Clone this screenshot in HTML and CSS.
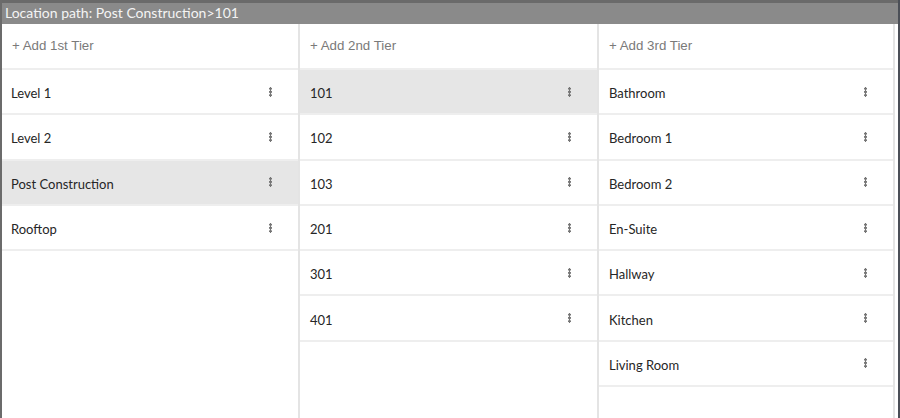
FILE: index.html
```html
<!DOCTYPE html>
<html lang="en">
<head>
    <meta charset="UTF-8">
    <title>Locations</title>
    <link rel="stylesheet" href="styles.css">
</head>
<body>
    <div class="locations">
        <div class="path-bar">Location path: Post Construction&gt;101</div>
        <div class="tiers">
            <div class="tier">
                <div class="add-row">+ Add 1st Tier</div>
                <div class="item"><span>Level 1</span><i class="kebab"></i></div>
                <div class="item"><span>Level 2</span><i class="kebab"></i></div>
                <div class="item selected"><span>Post Construction</span><i class="kebab"></i></div>
                <div class="item"><span>Rooftop</span><i class="kebab"></i></div>
            </div>
            <div class="tier">
                <div class="add-row">+ Add 2nd Tier</div>
                <div class="item selected"><span>101</span><i class="kebab"></i></div>
                <div class="item"><span>102</span><i class="kebab"></i></div>
                <div class="item"><span>103</span><i class="kebab"></i></div>
                <div class="item"><span>201</span><i class="kebab"></i></div>
                <div class="item"><span>301</span><i class="kebab"></i></div>
                <div class="item"><span>401</span><i class="kebab"></i></div>
            </div>
            <div class="tier">
                <div class="add-row">+ Add 3rd Tier</div>
                <div class="item"><span>Bathroom</span><i class="kebab"></i></div>
                <div class="item"><span>Bedroom 1</span><i class="kebab"></i></div>
                <div class="item"><span>Bedroom 2</span><i class="kebab"></i></div>
                <div class="item"><span>En-Suite</span><i class="kebab"></i></div>
                <div class="item"><span>Hallway</span><i class="kebab"></i></div>
                <div class="item"><span>Kitchen</span><i class="kebab"></i></div>
                <div class="item"><span>Living Room</span><i class="kebab"></i></div>
            </div>
        </div>
    </div>
</body>
</html>
```

FILE: styles.css
```css
body {
    margin: 0;
    padding: 0;
    font-family: Lato, "Liberation Sans", sans-serif;
    background: #fff;
}

.locations {
    height: 418px;
    box-sizing: border-box;
    border-left: 2px solid #6b6b6b;
    border-right: 2px solid #4b4f57;
    display: flex;
    flex-direction: column;
}

.path-bar {
    height: 24px;
    box-sizing: border-box;
    border-top: 3px solid #6a6a6a;
    background: #8a8a8a;
    color: #f4f4f4;
    font-size: 14px;
    line-height: 20px;
    padding-left: 3px;
}

.tiers {
    flex: 1;
    display: flex;
    padding-right: 3px;
}

.tier {
    width: 297px;
    border-right: 2px solid #e4e4e4;
}
.tier:first-child {
    width: 296px;
}
.tier:last-child {
    width: 294px;
}

.add-row {
    height: 46px;
    box-sizing: border-box;
    border-bottom: 2px solid #eeeeee;
    padding: 14px 10px 0;
    font-family: "Liberation Sans", Arial, sans-serif;
    font-size: 13.3px;
    color: #7a7a7a;
}

.item {
    height: 45.3px;
    box-sizing: border-box;
    border-bottom: 2px solid #eeeeee;
    display: flex;
    align-items: center;
    justify-content: space-between;
    padding: 3px 26px 0 9px;
    font-size: 13px;
    color: #262626;
}
.tier + .tier .item {
    padding-left: 10px;
}

.item.selected {
    background: #e6e6e6;
}

.kebab {
    width: 3px;
    height: 10px;
    margin-top: -3px;
    background: radial-gradient(circle, #767676 1.4px, transparent 1.6px) 0 0 / 3px 3.3px repeat-y;
}
```
